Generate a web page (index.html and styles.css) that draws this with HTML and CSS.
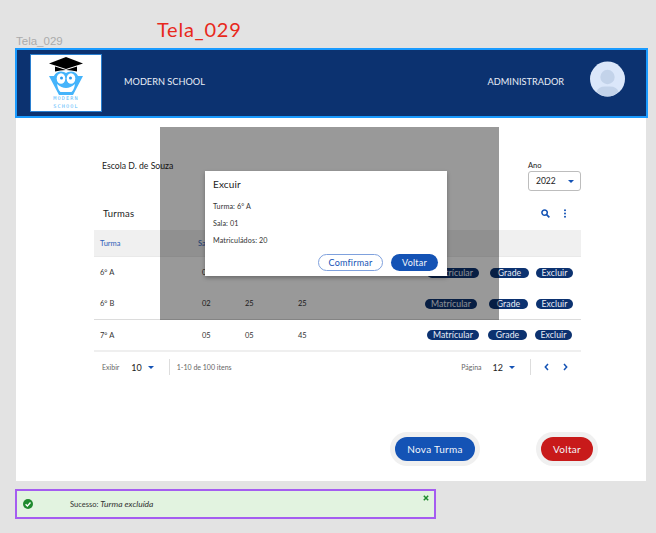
FILE: index.html
```html
<!DOCTYPE html>
<html lang="pt">
<head>
<meta charset="utf-8">
<title>Tela_029</title>
<link rel="stylesheet" href="styles.css">
</head>
<body>
<h1 class="canvas-title">Tela_029</h1>
<div class="frame-label">Tela_029</div>
<div class="screen">
  <header class="topbar">
    <div class="logo">
      <svg class="logo-mark" viewBox="0 0 36 39" width="36" height="39" aria-hidden="true">
        <path d="M18 0 L35 6.500 L18 12 L1 6.500 Z" fill="#000"/>
        <path d="M7 9.500 L18 13 L29 9.500 V14.500 Q18 11.500 7 14.500 Z" fill="#000"/>
        <path d="M1 19 H6 Q8 14.500 13 14.500 Q16.500 14.500 18 16 Q19.500 14.500 23 14.500 Q28 14.500 30 19 H35 L25 38 H11 Z" fill="#45b4fb"/>
        <ellipse cx="13" cy="21.500" rx="4.300" ry="5.300" fill="#fff"/>
        <ellipse cx="23" cy="21.500" rx="4.300" ry="5.300" fill="#fff"/>
        <circle cx="13.500" cy="21" r="1.500" fill="#2a9bee"/>
        <circle cx="22.500" cy="21" r="1.500" fill="#2a9bee"/>
        <path d="M9 27 Q18 35 27 27 Q26 33 23.500 35 H12.500 Q10 33 9 27 Z" fill="#fff"/>
      </svg>
      <div class="logo-text">MODERN<br>SCHOOL</div>
    </div>
    <div class="brand">MODERN SCHOOL</div>
    <div class="user">ADMINISTRADOR</div>
    <svg class="avatar" viewBox="0 0 35 36" width="35" height="36" aria-hidden="true">
      <circle cx="17.500" cy="18" r="17.500" fill="#dbe7fa"/>
      <circle cx="17.500" cy="16" r="7.200" fill="#c3d3ea"/>
      <path d="M6.500 31 Q8 25.500 15 25.500 H20 Q27 25.500 28.500 31 Q23 35.500 17.500 35.500 Q12 35.500 6.500 31 Z" fill="#c3d3ea"/>
    </svg>
  </header>

  <main class="content">
    <div class="school-row">
      <div class="school">Escola D. de Souza</div>
      <div class="year">
        <div class="year-label">Ano</div>
        <div class="select"><span>2022</span><i class="caret"></i></div>
      </div>
    </div>
    <div class="title-row">
      <div class="section-title">Turmas</div>
      <div class="tools">
        <svg viewBox="0 0 10 10" width="9" height="9" aria-hidden="true"><circle cx="4" cy="4" r="3" fill="none" stroke="#1453b5" stroke-width="1.700"/><path d="M6.200 6.200 L9.300 9.300" stroke="#1453b5" stroke-width="1.900"/></svg>
        <svg viewBox="0 0 4 10" width="4" height="9" aria-hidden="true"><circle cx="2" cy="1.300" r="1.100" fill="#1453b5"/><circle cx="2" cy="5" r="1.100" fill="#1453b5"/><circle cx="2" cy="8.700" r="1.100" fill="#1453b5"/></svg>
      </div>
    </div>
    <div class="table">
      <div class="row head"><span class="c1">Turma</span><span class="head-c2">Sala</span></div>
      <div class="row r1">
        <span class="c1">6° A</span><span class="c2">01</span><span class="c3">20</span><span class="c4">20</span>
        <div class="actions"><span class="pill">Matrícular</span><span class="pill">Grade</span><span class="pill">Excluir</span></div>
      </div>
      <div class="row r2 line">
        <span class="c1">6° B</span><span class="c2">02</span><span class="c3">25</span><span class="c4">25</span>
        <div class="actions"><span class="pill">Matrícular</span><span class="pill">Grade</span><span class="pill">Excluir</span></div>
      </div>
      <div class="row r3 line-strong">
        <span class="c1">7° A</span><span class="c2">05</span><span class="c3">05</span><span class="c4">45</span>
        <div class="actions"><span class="pill">Matrícular</span><span class="pill">Grade</span><span class="pill">Excluir</span></div>
      </div>
    </div>
    <div class="pager">
      <span class="muted">Exibir</span><span class="count">10</span><i class="caret"></i><span class="sep"></span><span class="muted">1-10 de 100 itens</span>
      <span class="muted page-label">Página</span><span class="count">12</span><i class="caret"></i><span class="sep sep-right"></span>
      <svg class="chev" viewBox="0 0 5 8" width="5" height="8" aria-hidden="true"><path d="M4 1 L1.300 4 L4 7" fill="none" stroke="#1453b5" stroke-width="1.500"/></svg>
      <svg class="chev chev-next" viewBox="0 0 5 8" width="5" height="8" aria-hidden="true"><path d="M1 1 L3.700 4 L1 7" fill="none" stroke="#1453b5" stroke-width="1.500"/></svg>
    </div>
    <div class="footer-actions">
      <div class="halo"><button class="btn btn-blue">Nova Turma</button></div>
      <div class="halo"><button class="btn btn-red">Voltar</button></div>
    </div>
  </main>

  <div class="overlay">
    <div class="modal">
      <div class="modal-title">Excuir</div>
      <p class="modal-line">Turma: 6° A</p>
      <p class="modal-line">Sala: 01</p>
      <p class="modal-line">Matriculádos: 20</p>
      <div class="modal-actions">
        <button class="mbtn mbtn-outline">Comfirmar</button>
        <button class="mbtn mbtn-solid">Voltar</button>
      </div>
    </div>
  </div>
</div>

<div class="toast">
  <svg class="toast-check" viewBox="0 0 10 10" width="10" height="10" aria-hidden="true"><circle cx="5" cy="5" r="5" fill="#1f8a2e"/><path d="M2.600 5.200 L4.400 7 L7.500 3.500" fill="none" stroke="#fff" stroke-width="1.300"/></svg>
  <span class="toast-text">Sucesso: <em>Turma excluída</em></span>
  <svg class="toast-close" viewBox="0 0 6 6" width="6" height="6" aria-hidden="true"><path d="M.8 .8 L5.200 5.200 M5.200 .8 L.8 5.200" stroke="#1f8a2e" stroke-width="1.500"/></svg>
</div>
</body>
</html>
```
FILE: styles.css
```css
* { box-sizing: border-box; }
html, body { margin: 0; height: 533px; overflow: hidden; }
body { background: #e3e3e3; font-family: "Lato", "Noto Sans", sans-serif; color: #333; }

.canvas-title { margin: 0; padding: 17px 0 0 157px; height: 35px; font-size: 20px; line-height: 24px; font-weight: 400; color: #e8291c; letter-spacing: .75px; }
.frame-label { padding-left: 16px; height: 13px; font-family: "Liberation Sans", sans-serif; font-size: 11.500px; line-height: 12px; color: #ababab; }

.screen { position: relative; margin-left: 16px; width: 630px; height: 433px; background: #fff; }

.topbar { display: flex; align-items: center; margin-left: -1px; width: 633px; height: 70px; background: #0c3270; border: 2px solid #1a9bff; padding-left: 13px; color: #e9eef7; font-size: 9.200px; }
.logo { display: flex; flex-direction: column; align-items: center; width: 72px; height: 58px; background: #fff; border: 1px solid #2a7fd0; padding-top: 2px; overflow: hidden; }
.logo-mark { flex: none; }
.logo-text { margin-top: -1px; font-family: "DejaVu Sans Mono", monospace; font-size: 5.200px; line-height: 7.500px; letter-spacing: 1.100px; color: #5dbcfb; text-align: center; }
.brand { margin: -4px 0 0 22px; }
.user { margin: -4px 1px 0 auto; }
.avatar { margin: -8px 21px 0 25px; }

.content { padding: 0 65px 0 78px; }
.school-row { display: flex; justify-content: space-between; height: 73px; padding: 43px 0 0 8px; font-size: 8.700px; color: #222; }
.school { margin-top: -1px; }
.year { width: 53px; }
.year-label { font-size: 7.500px; line-height: 9px; margin-bottom: 1px; }
.select { display: flex; align-items: center; justify-content: space-between; height: 20px; padding: 0 6px 0 7px; border: 1px solid #bdbdbd; border-radius: 3px; font-size: 8.500px; }

.title-row { display: flex; justify-content: space-between; align-items: center; height: 39px; padding: 5px 12px 0 9px; }
.section-title { font-size: 9.500px; color: #222; letter-spacing: .2px; }
.tools { display: flex; align-items: center; gap: 13px; padding-right: 2px; }

.table { font-size: 7.500px; color: #333; }
.row { position: relative; display: flex; align-items: center; height: 31.500px; padding-left: 6px; }
.head { height: 27px; background: #f0f0f0; border-bottom: 1px solid #e9e9e9; color: #2f5fb8; }
.line { border-bottom: 1px solid #dcdcdc; }
.line-strong { border-bottom: 2px solid #efefef; padding-top: 1px; }
.c1 { width: 98px; }
.head-c2 { width: 47px; }
.c2 { width: 47px; padding-left: 4px; }
.c3 { width: 53px; }
.c4 { width: 20px; }
.actions { position: absolute; left: 333px; display: flex; }
.r3 .actions { top: 10px; }
.pill { display: block; height: 10px; line-height: 10px; text-align: center; border-radius: 5px; background: #0c3270; color: #e9eef7; font-size: 8.700px; letter-spacing: .1px; }
.pill:nth-child(1) { width: 52px; }
.pill:nth-child(2) { width: 39px; }
.pill:nth-child(3) { width: 37px; }
.r2 .actions { left: 331px; }
.r1 .pill:nth-child(2) { margin: 0 7px 0 11px; }
.r2 .pill:nth-child(2) { margin: 0 8px 0 12px; }
.r3 .pill:nth-child(2) { margin: 0 8px 0 9px; }

.pager { display: flex; align-items: center; height: 31px; padding-left: 8px; font-size: 7px; }
.muted { color: #666; }
.count { margin-left: 12px; font-size: 9px; color: #222; }
.caret { display: inline-block; width: 0; height: 0; border-left: 3px solid transparent; border-right: 3px solid transparent; border-top: 3px solid #1453b5; }
.pager .caret { margin-left: 6px; }
.sep { width: 1px; height: 16px; background: #ddd; margin: 0 7px 0 15px; }
.page-label { margin-left: auto; }
.pager .page-label + .count { margin-left: 11px; }
.sep-right { margin: 0 13px 0 15px; }
.chev { display: block; }
.chev-next { margin: 0 13px 0 14px; }

.footer-actions { display: flex; justify-content: flex-end; gap: 56px; padding: 49px 0 0; margin-right: -17px; }
.halo { padding: 5px; border-radius: 17px; background: #f0f0f0; }
.btn { display: block; height: 24px; border: 0; border-radius: 12px; font: inherit; font-size: 10px; letter-spacing: .3px; color: #f3f6fb; }
.btn-blue { width: 80px; background: #1453b5; }
.btn-red { width: 52px; background: #c81a1a; }

.overlay { position: absolute; left: 144px; top: 79px; width: 339px; height: 193px; padding: 44px 0 0 45px; background: rgba(0, 0, 0, .4); }
.modal { width: 242px; height: 105px; padding: 7px 8px 8px; background: #fff; box-shadow: 0 2px 4px rgba(0, 0, 0, .3); color: #333; }
.modal-title { font-size: 10px; line-height: 12px; color: #222; margin-bottom: 13px; letter-spacing: .15px; }
.modal-line { margin: 0 0 9px; font-size: 7.200px; line-height: 8px; letter-spacing: .1px; }
.modal-actions { display: flex; justify-content: flex-end; gap: 8px; margin-top: 5px; padding-right: 1px; }
.mbtn { display: block; height: 17px; padding: 0; border-radius: 9px; font: inherit; font-size: 9px; letter-spacing: .2px; }
.mbtn-outline { width: 65px; background: #fff; color: #1453b5; border: 1px solid #7fa1dd; }
.mbtn-solid { width: 47px; background: #1453b5; border: 0; color: #f3f6fb; }

.toast { position: relative; display: flex; align-items: center; margin: 8px 0 0 15px; width: 421px; height: 30px; padding-left: 6px; background: #e2f3e0; border: 2px solid #a55df0; font-size: 7.500px; color: #333; }
.toast-text { margin-left: 37px; }
.toast-check { flex: none; }
.toast-text em { font-size: 8.500px; }
.toast-close { position: absolute; right: 5px; top: 4px; }
```
